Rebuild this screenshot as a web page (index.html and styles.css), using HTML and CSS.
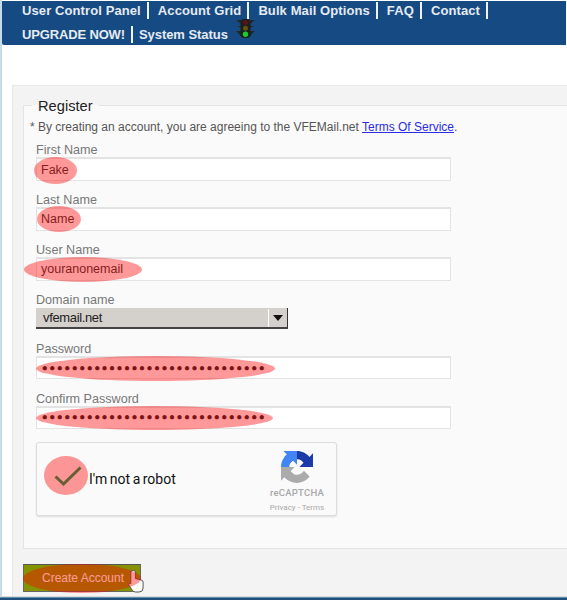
FILE: index.html
```html
<!DOCTYPE html>
<html lang="en">
<head>
<meta charset="utf-8">
<title>Register</title>
<link rel="stylesheet" href="styles.css">
</head>
<body>
<div class="page">
  <nav class="nav">
    <a href="#">User Control Panel</a>
    <a href="#">Account Grid</a>
    <a href="#">Bulk Mail Options</a>
    <a href="#">FAQ</a>
    <a href="#">Contact</a>
    <a href="#" class="tight">UPGRADE NOW!</a>
    <a href="#" class="last">System Status
      <svg class="light" viewBox="0 0 19 19" width="19" height="19">
        <path d="M0 1h5v17l-1-2-4-4h5v-3L1 7h4V5zM19 1h-5v17l1-2 4-4h-5v-3l4-2h-4V5z" fill="#1e2a26"/>
        <rect x="4.500" y="0" width="10" height="19" rx="4" fill="#1a1f1f"/>
        <circle cx="9.500" cy="3.500" r="2.500" fill="#5e1212"/>
        <circle cx="9.500" cy="9.300" r="2.500" fill="#655010"/>
        <circle cx="9.500" cy="15.200" r="2.700" fill="#1ccc2c"/>
      </svg>
    </a>
  </nav>
  <div class="panel">
    <fieldset class="box">
      <legend>Register</legend>
      <p class="terms">* By creating an account, you are agreeing to the VFEMail.net <a href="#">Terms Of Service</a>.</p>
      <div class="fields">
        <div class="field"><label>First Name</label><input type="text" value="Fake"></div>
        <div class="field"><label>Last Name</label><input type="text" value="Name"></div>
        <div class="field"><label>User Name</label><input type="text" value="youranonemail"></div>
        <div class="field field-select"><label>Domain name</label>
          <div class="select"><span class="select-text">vfemail.net</span><span class="select-btn"><i></i></span></div>
        </div>
        <div class="field"><label>Password</label><input class="pw" type="password" value="aaaaaaaaaaaaaaaaaaaaaaaaaaaaaa"></div>
        <div class="field"><label>Confirm Password</label><input class="pw" type="password" value="aaaaaaaaaaaaaaaaaaaaaaaaaaaaaa"></div>
      </div>
      <div class="captcha">
        <svg class="check" viewBox="0 0 28 20" width="28" height="20"><path d="M1.500 10.500l8 7.500L26.500 1.500" fill="none" stroke="#009e55" stroke-width="3"/></svg>
        <span class="robot">I'm not a robot</span>
        <div class="brand">
          <svg viewBox="0 0 64 64" width="32" height="32">
            <path d="M64 31.955l-.033-1.370V4.687l-7.160 7.160C50.948 4.674 42.033.097 32.050.097c-10.400 0-19.622 4.960-25.458 12.640l11.736 11.860a15.550 15.550 0 0 1 4.750-5.330c2.050-1.600 4.952-2.906 8.972-2.906.486 0 .860.057 1.136.163 4.980.393 9.300 3.140 11.840 7.130l-8.308 8.310c10.523-.040 22.400-.066 27.850.074" fill="#1c3aa9"/>
            <path d="M31.988 0l-1.370.033H4.720l7.160 7.160C4.700 13.050.130 21.965.130 31.950c0 10.400 4.960 19.622 12.640 25.458l11.860-11.736a15.550 15.550 0 0 1-5.330-4.750c-1.600-2.050-2.906-4.952-2.906-8.972 0-.486.057-.860.163-1.136.393-4.980 3.140-9.300 7.130-11.840l8.310 8.308c-.040-10.523-.066-22.400.074-27.850" fill="#4285f4"/>
            <path d="M.002 32l.033 1.370v25.898l7.160-7.160c5.857 7.173 14.772 11.750 24.757 11.750 10.400 0 19.622-4.960 25.458-12.640l-11.736-11.860a15.550 15.550 0 0 1-4.750 5.330c-2.050 1.600-4.952 2.906-8.972 2.906-.486 0-.860-.057-1.136-.163-4.980-.393-9.300-3.140-11.840-7.130l8.308-8.310c-10.523.040-22.400.066-27.850-.074" fill="#ababab"/>
          </svg>
          <span class="brand-name">reCAPTCHA</span>
          <span class="brand-links">Privacy - Terms</span>
        </div>
      </div>
    </fieldset>
    <div class="submit"><button type="button">Create Account</button></div>
  </div>
  <svg class="cursor" viewBox="0 0 16 23" width="16" height="23">
    <path d="M2.800 2.500a2.300 2.300 0 0 1 4.600 0V8.500l5.700 1.500a2.200 2.200 0 0 1 2 2.200V18a4 4 0 0 1-4 4H7.500a4 4 0 0 1-3-1.500L1 15.500c-.8-1.500 .8-2.800 1.800-1.800z" fill="#fff" stroke="#555" stroke-width="1"/>
  </svg>
  <span class="mark mark-first"></span>
  <span class="mark mark-last"></span>
  <span class="mark mark-user"></span>
  <span class="mark mark-pw"></span>
  <span class="mark mark-confirm"></span>
  <span class="mark mark-check"></span>
  <span class="mark mark-submit"></span>
  <div class="taskbar"></div>
</div>
</body>
</html>
```
FILE: styles.css
```css
* { box-sizing: border-box; }
html, body { margin: 0; padding: 0; }
body { font-family: "Liberation Sans", Arial, sans-serif; background: #fff; }
.page { position: relative; width: 567px; height: 600px; overflow: hidden; background: #fff; padding: 1px 1px 0 2px; }
.page::before { content: ""; position: absolute; left: 0; top: 0; bottom: 0; width: 2px; background: #c6dbe8; }
.nav { height: 44px; background: #164a82; border-radius: 0 0 0 2px; padding: 1px 20px 0 20px; display: flex; flex-wrap: wrap; align-content: flex-start; row-gap: 7px; }
.nav a { color: #e6ebf2; font-size: 13px; font-weight: bold; letter-spacing: .1px; text-decoration: none; line-height: 17px; height: 17px; padding-right: 6px; margin-right: 9px; border-right: 2px solid #f0f3f7; white-space: nowrap; }
.nav a.tight { margin-right: 6px; letter-spacing: -.15px; }
.nav a.last { border-right: 0; margin: 0; padding: 0; position: relative; letter-spacing: -.05px; }
.light { position: absolute; right: -27px; top: -7px; }
.panel { margin: 40px -60px 0 10px; background: #f3f3f3; border: 1px solid #e8e8e8; height: 530px; padding: 11px 10px; }
.box { margin: 0; padding: 0 12px; background: #fafafa; border: 1px solid #e4e4e4; height: 452px; min-width: 0; }
.box legend { margin-left: -4px; padding: 0 6px; font-size: 14.670px; color: #222; line-height: 17px; position: relative; top: 1px; }
.terms { margin: 5px 0 0 -6px; font-size: 12px; line-height: 16px; color: #555; }
.terms a { color: #2a2ae8; }
.fields { margin-top: 7px; }
.field { height: 49.800px; }
.field label { display: block; font-size: 12.600px; color: #777; line-height: 14px; padding-top: 1px; }
.field input { display: block; width: 415px; height: 24px; margin: 0; padding: 0 4px; border: 1px solid #e3e3e3; border-top-width: 2px; background: #fff; font: 12.500px "Liberation Sans", Arial, sans-serif; color: #333; outline: 0; }
.field input.pw { height: 23px; font-family: "DejaVu Sans", sans-serif; font-size: 12.700px; color: #222; -webkit-text-stroke: .6px #222; }
.field-select label { padding-top: 2px; }
.select { width: 252px; height: 21px; margin-top: 1px; background: #d4d0cc; display: flex; align-items: center; justify-content: space-between; border-right: 1px solid #333; border-bottom: 2px solid #444; }
.select-text { padding-left: 7px; font-size: 13px; letter-spacing: -.35px; color: #222; }
.select-btn { width: 19px; height: 18px; border-left: 1px solid #fff; display: flex; align-items: center; justify-content: center; }
.select-btn i { display: block; width: 0; height: 0; border: 5px solid transparent; border-top: 6px solid #111; border-bottom: 0; }
.captcha { width: 301px; height: 74px; margin-top: 1px; background: #fafafa; border: 1px solid #ddd; border-radius: 3px; box-shadow: 0 1px 2px rgba(0,0,0,.12); display: flex; align-items: center; position: relative; }
.check { margin: 0 0 6px 17px; }
.robot { margin-left: 7px; font: 14px Roboto, sans-serif; color: #111; word-spacing: -1px; }
.brand { margin-left: auto; width: 64px; margin-right: 7px; padding-top: 6px; display: flex; flex-direction: column; align-items: center; }
.brand-name { font: 500 9.500px Roboto, sans-serif; color: #a8a8a8; margin-top: 4px; letter-spacing: .25px; }
.brand-links { font: 8px Roboto, sans-serif; color: #a8a8a8; margin-top: 5px; }
.submit { margin-top: 15px; }
.submit button { width: 118px; height: 28px; padding: 0 0 0 18px; margin: 0; text-align: left; background: #859300; border: 1px solid #666; border-top-color: #555; color: #fff; font: 12px "Liberation Sans", Arial, sans-serif; }
.mark { position: absolute; border-radius: 50%; background: rgba(255, 0, 0, .4); }
.mark-first { left: 34px; top: 157px; width: 43px; height: 27px; }
.mark-last { left: 37px; top: 206px; width: 44px; height: 26px; }
.mark-user { left: 24px; top: 257px; width: 118px; height: 25px; }
.mark-pw { left: 36px; top: 356px; width: 239px; height: 25px; }
.mark-confirm { left: 36px; top: 406px; width: 237px; height: 24px; }
.mark-check { left: 44px; top: 456px; width: 44px; height: 39px; }
.mark-submit { left: 23px; top: 564px; width: 118px; height: 29px; }
.cursor { position: absolute; left: 128px; top: 570px; }
.taskbar { position: absolute; left: 0; right: 0; bottom: 0; height: 4px; background: linear-gradient(#d8d8d8 0 1px, #5f8fb0 1px 2px, #1f4f7a 2px); }
```
